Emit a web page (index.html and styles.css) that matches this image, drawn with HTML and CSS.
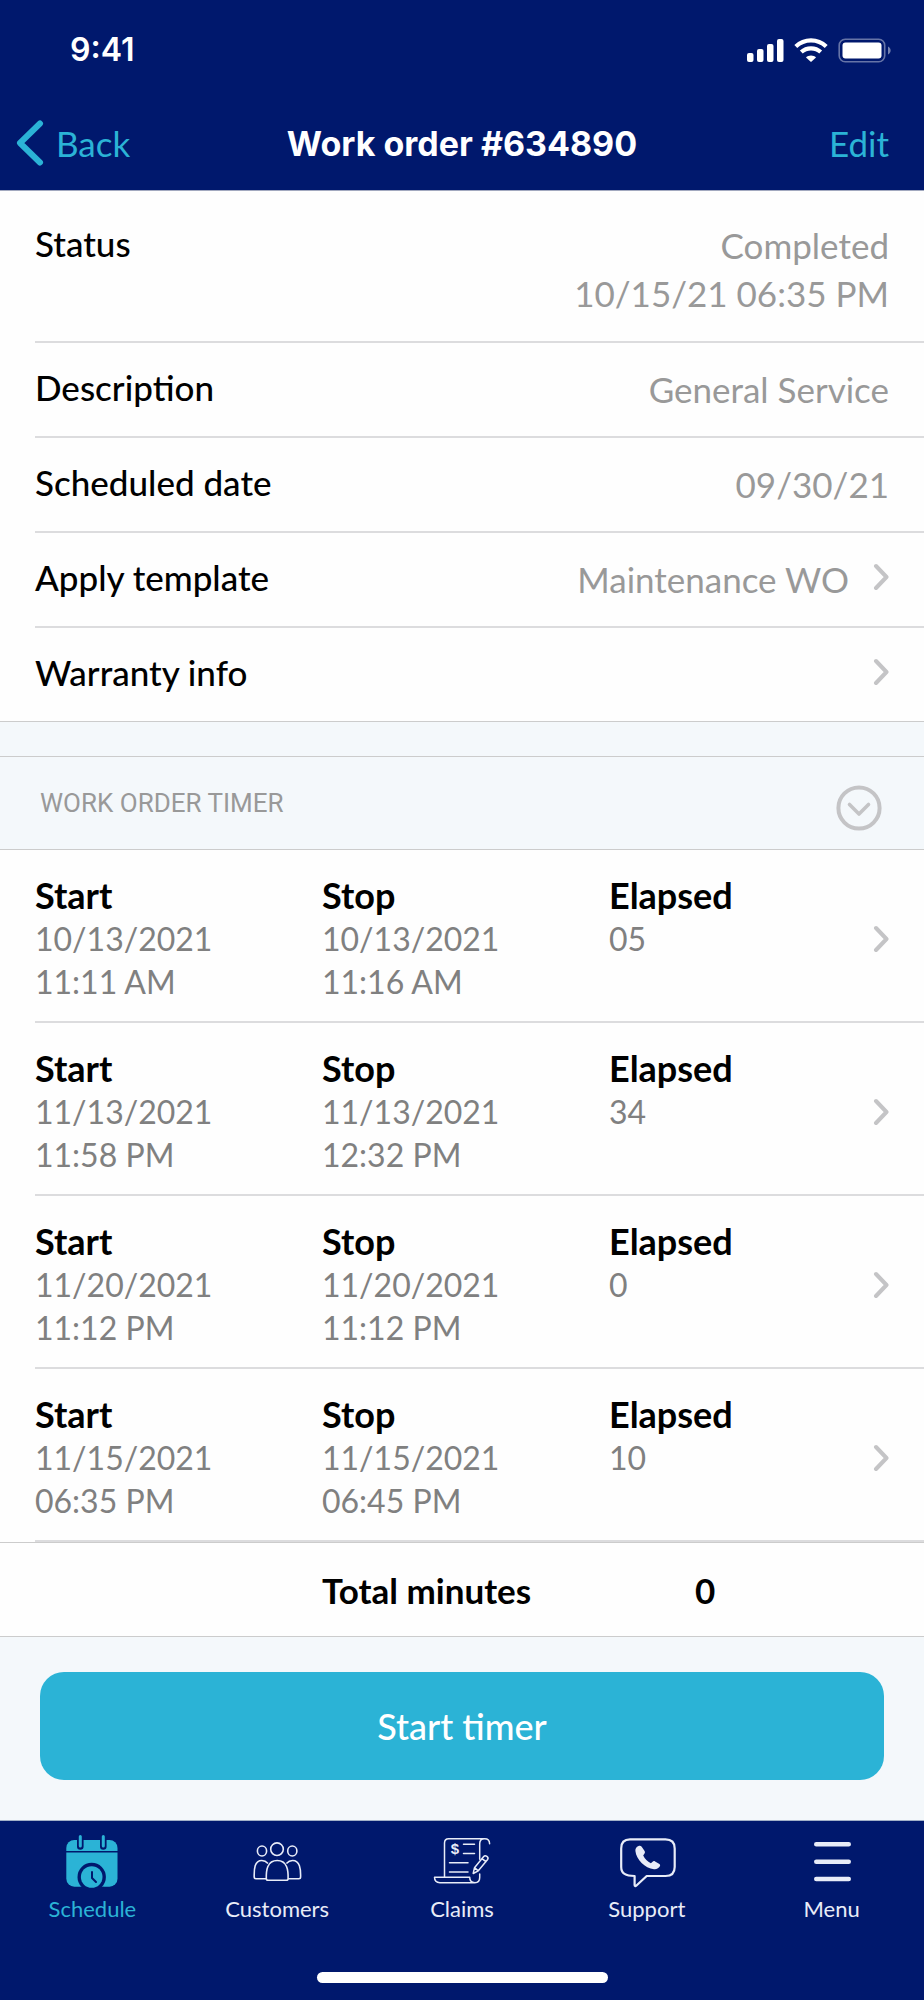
FILE: index.html
```html
<!DOCTYPE html>
<html lang="en">
<head>
<meta charset="utf-8">
<meta name="viewport" content="width=device-width, initial-scale=1">
<title>Work order #634890</title>
<link rel="stylesheet" href="styles.css">
</head>
<body>
<svg class="sprite" aria-hidden="true">
  <symbol id="chevron" viewBox="0 0 16 28"><path d="M3 3l10.500 11L3 25" fill="none" stroke="currentColor" stroke-width="4" stroke-linecap="round" stroke-linejoin="round"/></symbol>
</svg>
<div class="screen">
  <header class="top">
    <div class="statusbar">
      <span class="clock">9:41</span>
      <svg class="device" viewBox="0 0 146 26" aria-hidden="true">
        <g fill="#fff">
          <rect x="1" y="16" width="6.500" height="9" rx="2"/><rect x="11" y="12" width="6.500" height="13" rx="2"/><rect x="21" y="7" width="6.500" height="18" rx="2"/><rect x="31" y="2" width="6.500" height="23" rx="2"/>
          <path d="M65 18.500c-2 0-3.700.7-5 1.900l5 4.600 5-4.600c-1.300-1.200-3-1.900-5-1.900z"/>
        </g>
        <g fill="none" stroke="#fff" stroke-width="4.200">
          <path d="M49.800 9.400C53.800 5.600 59.100 3.300 65 3.300s11.200 2.300 15.200 6.100"/>
          <path d="M55.300 15c2.500-2.300 5.900-3.700 9.700-3.700s7.200 1.400 9.700 3.700"/>
        </g>
        <rect x="93.200" y="2.200" width="45.500" height="22.600" rx="6" fill="none" stroke="#fff" stroke-opacity=".4" stroke-width="1.600"/>
        <rect x="96.500" y="5.500" width="39" height="16" rx="3" fill="#fff"/>
        <path d="M142 9.500c3.500 1.500 3.500 6.500 0 8z" fill="#fff" fill-opacity=".45"/>
      </svg>
    </div>
    <nav class="titlebar">
      <a class="bar-link back" href="#back"><svg class="back-icon" viewBox="0 0 30 46" aria-hidden="true"><path d="M25 3.500L5 23l20 19.500" fill="none" stroke="currentColor" stroke-width="6" stroke-linecap="round" stroke-linejoin="round"/></svg>Back</a>
      <h1 class="title">Work order #634890</h1>
      <a class="bar-link edit" href="#edit">Edit</a>
    </nav>
  </header>

  <main>
    <section class="details">
      <div class="row row-status"><span class="label">Status</span><span class="value">Completed<br>10/15/21 06:35 PM</span></div>
      <div class="row"><span class="label">Description</span><span class="value">General Service</span></div>
      <div class="row"><span class="label">Scheduled date</span><span class="value">09/30/21</span></div>
      <a class="row" href="#template"><span class="label">Apply template</span><span class="value">Maintenance WO</span><svg class="chevron" aria-hidden="true"><use href="#chevron"/></svg></a>
      <a class="row" href="#warranty"><span class="label">Warranty info</span><svg class="chevron" aria-hidden="true"><use href="#chevron"/></svg></a>
    </section>

    <section class="timer">
      <div class="timer-head">
        <h2 class="timer-title">WORK ORDER TIMER</h2>
        <button class="toggle" type="button" aria-label="Collapse timer">
          <svg viewBox="0 0 46 46" fill="none" stroke="currentColor" aria-hidden="true"><circle cx="23" cy="23" r="20.600" stroke-width="4"/><path d="M13.500 19.500L23 29l9.500-9.500" stroke-width="3.600" stroke-linecap="round" stroke-linejoin="round"/></svg>
        </button>
      </div>
      <a class="entry" href="#entry-1">
        <span class="cell"><b class="cell-name">Start</b>10/13/2021<br>11:11 AM</span>
        <span class="cell"><b class="cell-name">Stop</b>10/13/2021<br>11:16 AM</span>
        <span class="cell"><b class="cell-name">Elapsed</b>05</span>
        <svg class="chevron" aria-hidden="true"><use href="#chevron"/></svg>
      </a>
      <a class="entry" href="#entry-2">
        <span class="cell"><b class="cell-name">Start</b>11/13/2021<br>11:58 PM</span>
        <span class="cell"><b class="cell-name">Stop</b>11/13/2021<br>12:32 PM</span>
        <span class="cell"><b class="cell-name">Elapsed</b>34</span>
        <svg class="chevron" aria-hidden="true"><use href="#chevron"/></svg>
      </a>
      <a class="entry" href="#entry-3">
        <span class="cell"><b class="cell-name">Start</b>11/20/2021<br>11:12 PM</span>
        <span class="cell"><b class="cell-name">Stop</b>11/20/2021<br>11:12 PM</span>
        <span class="cell"><b class="cell-name">Elapsed</b>0</span>
        <svg class="chevron" aria-hidden="true"><use href="#chevron"/></svg>
      </a>
      <a class="entry" href="#entry-4">
        <span class="cell"><b class="cell-name">Start</b>11/15/2021<br>06:35 PM</span>
        <span class="cell"><b class="cell-name">Stop</b>11/15/2021<br>06:45 PM</span>
        <span class="cell"><b class="cell-name">Elapsed</b>10</span>
        <svg class="chevron" aria-hidden="true"><use href="#chevron"/></svg>
      </a>
      <div class="total"><span class="total-name">Total minutes</span><span class="total-value">0</span></div>
    </section>

    <div class="action"><button class="start" type="button">Start timer</button></div>
  </main>

  <footer class="bottom">
    <nav class="tabs">
      <a class="tab tab-active" href="#schedule" aria-current="page">
        <svg class="tab-icon" viewBox="0 0 64 56" aria-hidden="true">
          <rect x="6.300" y="6" width="51.200" height="46.700" rx="8" fill="currentColor"/>
          <path d="M6 17.700h52" stroke="#00186d" stroke-width="1.600"/>
          <path d="M20.300 3v9.500M43.300 3v9.500" stroke="#00186d" stroke-width="6.600" stroke-linecap="round"/>
          <path d="M20.300 2.500v9.500M43.300 2.500v9.500" stroke="currentColor" stroke-width="3" stroke-linecap="round"/>
          <circle cx="31.700" cy="43" r="14.200" fill="#00186d"/>
          <path d="M20 52.900h24v6H20z" fill="#00186d"/>
          <circle cx="31.700" cy="43" r="10.800" fill="currentColor"/>
          <path d="M32 38v6l4 4" fill="none" stroke="#00186d" stroke-width="2" stroke-linecap="round" stroke-linejoin="round"/>
        </svg>Schedule</a>
      <a class="tab" href="#customers">
        <svg class="tab-icon" viewBox="0 0 64 56" fill="none" stroke="currentColor" stroke-width="1.600" stroke-linejoin="round" aria-hidden="true">
          <circle cx="32" cy="15.200" r="6.300"/><ellipse cx="17" cy="17" rx="4.600" ry="5"/><ellipse cx="47.300" cy="17" rx="4.600" ry="5"/>
          <path d="M21.300 44.500c-.2-8 .8-18 10.900-18s11.100 10 10.900 18c0 1.100-.7 1.800-1.800 1.800H23.100c-1.100 0-1.800-.7-1.800-1.800z"/>
          <path d="M23 29.500c-1.800-2-3.800-3-6.200-3C9.500 26.500 9 35 9.200 43c0 1.100.7 1.700 1.800 1.700h10.300M41.400 29.500c1.800-2 3.800-3 6.200-3C54.900 26.500 55.800 35 55.600 43c0 1.100-.7 1.700-1.800 1.700H43.100"/>
        </svg>Customers</a>
      <a class="tab" href="#claims">
        <svg class="tab-icon" viewBox="0 0 64 56" fill="none" stroke="currentColor" stroke-width="1.500" stroke-linecap="round" stroke-linejoin="round" aria-hidden="true">
          <path d="M14.500 43V9c0-2.800 1.500-4.300 4.200-4.300h36c3 0 4.900 2 4.900 5M54.500 4.700c-3 0-4.800 1.800-4.800 5v15.500M49.700 40v3.500c0 3.300-1.800 5.200-4.800 5.200H10c-3.500 0-5.500-2-5.500-5.400h35.200c0 3.300 2 5.400 5.200 5.400"/>
          <path d="M33.500 10.200h11M33.500 19.400h11M19.500 28.700h18.500M19.500 38h18.500"/>
          <path d="M43.200 39.500l1.300-5.800 9.200-11.200c1.700-2 5.500.7 3.900 3l-9.300 11.300zM44.500 33.700l3.800 3.100M52 24.600l3.900 3.100"/>
          <text class="icon-dollar" x="25" y="20" text-anchor="middle">$</text>
        </svg>Claims</a>
      <a class="tab" href="#support">
        <svg class="tab-icon" viewBox="0 0 64 56" fill="none" stroke="currentColor" aria-hidden="true">
          <path d="M15 5.400h35.500c6 0 9.200 3.200 9.200 9v18.600c0 6-3.200 9-9.200 9H31.700l-10.500 9.700c-.8.700-1.600.3-1.600-.7V42c-9 0-13.400-2.500-13.400-9V14.400c0-5.800 3-9 8.800-9z" stroke-width="2.200" stroke-linejoin="round"/>
          <path d="M23.500 12c-2.200 1-3.300 2.600-3.100 5 .9 8.300 9.500 17.300 18.600 18.300 2.600.3 5-1 6-3.200.3-.8.100-1.500-.6-2l-4.300-2.600c-1-.6-1.700-.5-2.500.2l-1.700 1.500c-3.500-1.700-6-4.200-7.700-7.600l1.300-2.100c.6-.8.600-1.600.1-2.500l-2.900-4.300c-.8-1-2-1.200-3.200-.7z" fill="currentColor" stroke="none"/>
        </svg>Support</a>
      <a class="tab" href="#menu">
        <svg class="tab-icon" viewBox="0 0 64 56" stroke="currentColor" stroke-width="4.600" stroke-linecap="round" aria-hidden="true"><path d="M16.300 10.300h32.400M16.300 27.700h32.400M16.300 45h32.400"/></svg>Menu</a>
    </nav>
    <div class="home"></div>
  </footer>
</div>
</body>
</html>
```

FILE: styles.css
```css
* { box-sizing: border-box; }
body { margin: 0; background: #f4f8fb; font-family: Lato, "Liberation Sans", sans-serif; color: #000; }
a { color: inherit; text-decoration: none; }
button { font: inherit; border: 0; padding: 0; cursor: pointer; }
.sprite { position: absolute; width: 0; height: 0; }
.screen { display: flex; flex-direction: column; min-height: 100vh; }
main { flex: 1; }

.top { background: #00186d; color: #fff; border-bottom: 1px solid #a2a9bf; }
.statusbar { display: flex; justify-content: space-between; align-items: center; padding: 30px 32px 0 70px; }
.clock { font: 600 32px/40px Inter, sans-serif; }
.device { width: 146px; height: 26px; }
.titlebar { display: grid; grid-template-columns: 1fr auto 1fr; align-items: center; padding: 48px 0 22px; }
.bar-link { font-size: 35px; line-height: 48px; color: #2bb3d6; }
.back { display: flex; align-items: center; gap: 11px; padding-left: 15px; }
.back-icon { width: 30px; height: 46px; }
.edit { padding-right: 35px; text-align: right; }
.title { margin: 0; padding-top: 2px; font: 700 34px/48px Inter, sans-serif; }

.details { background: #fefefe; border-bottom: 1px solid #ccc; }
.row { display: flex; margin-left: 35px; padding: 20px 35px 25px 0; border-bottom: 2px solid #dcdcde; font-size: 35px; line-height: 48px; }
.row:last-child { border-bottom: 0; }
.row-status { padding: 28px 35px 24px 0; }
.label { flex: 1; font-weight: 500; }
.value { padding-top: 2px; margin-bottom: -2px; text-align: right; color: #999; }
.row-status .value { margin-bottom: 0; }
.chevron { width: 16px; height: 28px; color: #c4c4c6; align-self: center; }
.row .chevron { margin-left: 24px; }

.timer { margin-top: 34px; background: #fefefe; }
.timer-head { display: flex; justify-content: space-between; align-items: flex-start; padding: 28px 42px 18px 40px; border: solid #ccc; border-width: 1px 0; background: #f4f8fb; }
.timer-title { margin: 0; font: 400 26px/36px Roboto, sans-serif; color: #999; }
.toggle { width: 46px; height: 46px; background: none; color: #c4c4c6; }
.entry { display: grid; grid-template-columns: 287fr 287fr 264fr 16px; align-items: start; margin-left: 35px; padding: 24px 35px 18px 0; border-bottom: 2px solid #dcdcde; font-size: 32px; line-height: 43px; color: #808080; }
.cell-name { display: block; font-size: 36px; font-weight: 700; color: #000; }
.total { display: grid; grid-template-columns: 287fr 287fr 280fr; padding: 23px 35px 22px; border: solid #ccc; border-width: 1px 0; font-size: 35px; line-height: 48px; font-weight: 700; }
.total-name { grid-column: 2; }
.total-value { padding-left: 86px; }

.action { padding: 35px 40px 38px; }
.start { width: 100%; padding: 30px; border-radius: 24px; background: #2bb3d6; color: #fff; font-size: 36px; font-weight: 500; line-height: 48px; }

.bottom { padding: 13px 0 17px; border-top: 1px solid #a2b0c8; background: #00186d; color: #e8ecf8; }
.tabs { display: grid; grid-template-columns: repeat(5, 1fr); }
.tab { display: flex; flex-direction: column; align-items: center; gap: 5px; font-size: 22px; line-height: 28px; }
.tab-active { color: #2bb3d6; }
.tab-icon { width: 64px; height: 56px; }
.icon-dollar { font: 700 15px "Liberation Sans", sans-serif; fill: currentColor; stroke: none; }
.home { width: 291px; height: 11px; margin: 49px auto 0; border-radius: 6px; background: #fff; }
```
